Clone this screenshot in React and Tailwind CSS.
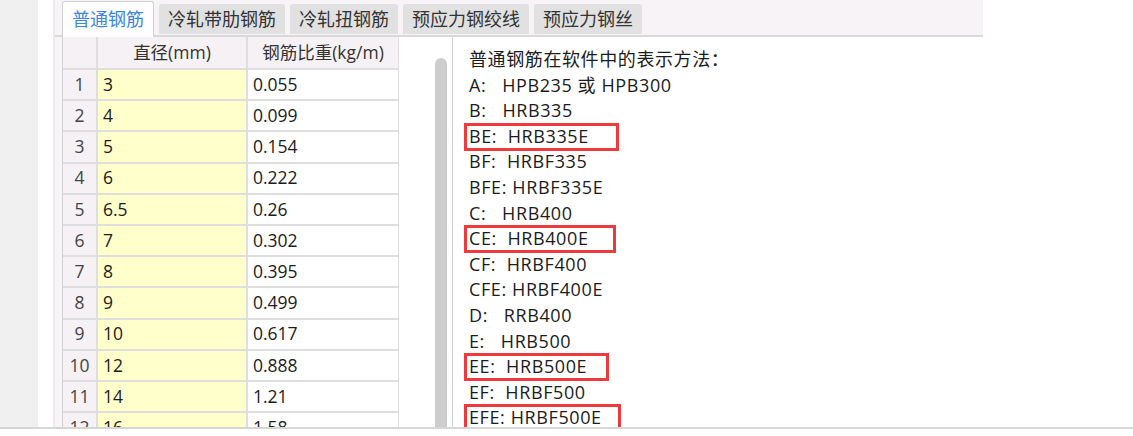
import React from 'react';

const tabs = ['普通钢筋', '冷轧带肋钢筋', '冷轧扭钢筋', '预应力钢绞线', '预应力钢丝'];

const rows = [
  ['3', '0.055'],
  ['4', '0.099'],
  ['5', '0.154'],
  ['6', '0.222'],
  ['6.5', '0.26'],
  ['7', '0.302'],
  ['8', '0.395'],
  ['9', '0.499'],
  ['10', '0.617'],
  ['12', '0.888'],
  ['14', '1.21'],
  ['16', '1.58'],
  ['18', '2.00'],
];

// marked: width of the red box around the line
const grades = [
  { text: 'A:   HPB235 或 HPB300' },
  { text: 'B:   HRB335' },
  { text: 'BE:  HRB335E', marked: 'w-[155px]' },
  { text: 'BF:  HRBF335' },
  { text: 'BFE: HRBF335E' },
  { text: 'C:   HRB400' },
  { text: 'CE:  HRB400E', marked: 'w-[152px]' },
  { text: 'CF:  HRBF400' },
  { text: 'CFE: HRBF400E' },
  { text: 'D:   RRB400' },
  { text: 'E:   HRB500' },
  { text: 'EE:  HRB500E', marked: 'w-[145px]' },
  { text: 'EF:  HRBF500' },
  { text: 'EFE: HRBF500E', marked: 'w-[157px]' },
];

export default function App() {
  return (
    <div
      className="w-[1133px] h-[436px] bg-white flex flex-col overflow-hidden text-[17.5px] text-[#1c1c1c]"
      style={{ fontFamily: '"Open Sans", "Noto Sans CJK SC", sans-serif' }}
    >
      <div className="flex h-[427px]">
        <div className="w-[38px] bg-[#f0f0f0]" />
        <div className="w-[15px] bg-white" />
        <div className="w-[2px] bg-[#ececec]" />

        <div className="w-[928px] flex flex-col bg-[#f7f3f6]">
          {/* tab strip */}
          <div className="h-[37px] flex items-end gap-[5px] pl-[7px] border-b-2 border-[#d9d9d9] text-[18px]">
            {tabs.map((t, i) =>
              i === 0 ? (
                <div
                  key={t}
                  className="h-[36px] -mb-[2px] px-[9px] flex items-center bg-white border border-b-0 border-[#d0d0d0] rounded-t-[3px] text-[#3a86e0]"
                >
                  {t}
                </div>
              ) : (
                <div
                  key={t}
                  className="h-[30px] mb-[1px] px-[9px] flex items-center bg-[#e1e1e1] rounded-t-[3px] text-[#333]"
                >
                  {t}
                </div>
              )
            )}
          </div>

          {/* body */}
          <div className="flex flex-1 min-h-0">
            <div className="w-[7px]" />
            <div className="w-[337px] overflow-hidden bg-white border-l border-[#d0d0d0]">
              <table className="table-fixed border-collapse w-[336px]">
                <colgroup>
                  <col className="w-[34px]" />
                  <col className="w-[150px]" />
                  <col className="w-[152px]" />
                </colgroup>
                <thead>
                  <tr className="h-[32px] bg-[#f5f1f4] text-[#333]">
                    <th className="font-normal border-r-2 border-b-2 border-[#dedede]" />
                    <th className="font-normal text-center border-r-2 border-b-2 border-[#dedede]">直径(mm)</th>
                    <th className="font-normal text-center border-r-2 border-b-2 border-[#dedede] whitespace-nowrap">钢筋比重(kg/m)</th>
                  </tr>
                </thead>
                <tbody>
                  {rows.map(([d, w], idx) => (
                    <tr key={idx} className="h-[31.2px]">
                      <td className="bg-[#f5f1f4] text-center text-[#444] border-r-2 border-b-2 border-[#dedede] leading-none">
                        {idx + 1}
                      </td>
                      <td className="bg-[#ffffcc] pl-[5px] border-r-2 border-b-2 border-[#dedede] leading-none">{d}</td>
                      <td className="bg-white pl-[5px] border-r-2 border-b-2 border-[#dedede] leading-none">{w}</td>
                    </tr>
                  ))}
                </tbody>
              </table>
            </div>

            <div className="w-[53px] bg-white flex justify-end pr-[5px] pt-[21px]">
              <div className="w-[12px] h-full bg-[#cdcdcd] rounded-t-full" />
            </div>
            <div className="w-px bg-[#d0d0d0]" />

            <div className="flex-1 bg-white pl-[16px] pt-[10px] overflow-hidden text-[18px] tracking-[0.6px]">
              <div className="leading-[25.6px]">普通钢筋在软件中的表示方法：</div>
              {grades.map((g) => (
                <div key={g.text} className="relative leading-[25.6px] whitespace-pre">
                  {g.text}
                  {g.marked && (
                    <div
                      className={`absolute -left-[5px] -top-[1px] h-[28px] border-[3px] border-[#ee3a3d] ${g.marked}`}
                    />
                  )}
                </div>
              ))}
            </div>
          </div>
        </div>

        <div className="flex-1 bg-white" />
      </div>
      <div className="flex-1 border-t-2 border-[#d6d6d6] bg-white" />
    </div>
  );
}
